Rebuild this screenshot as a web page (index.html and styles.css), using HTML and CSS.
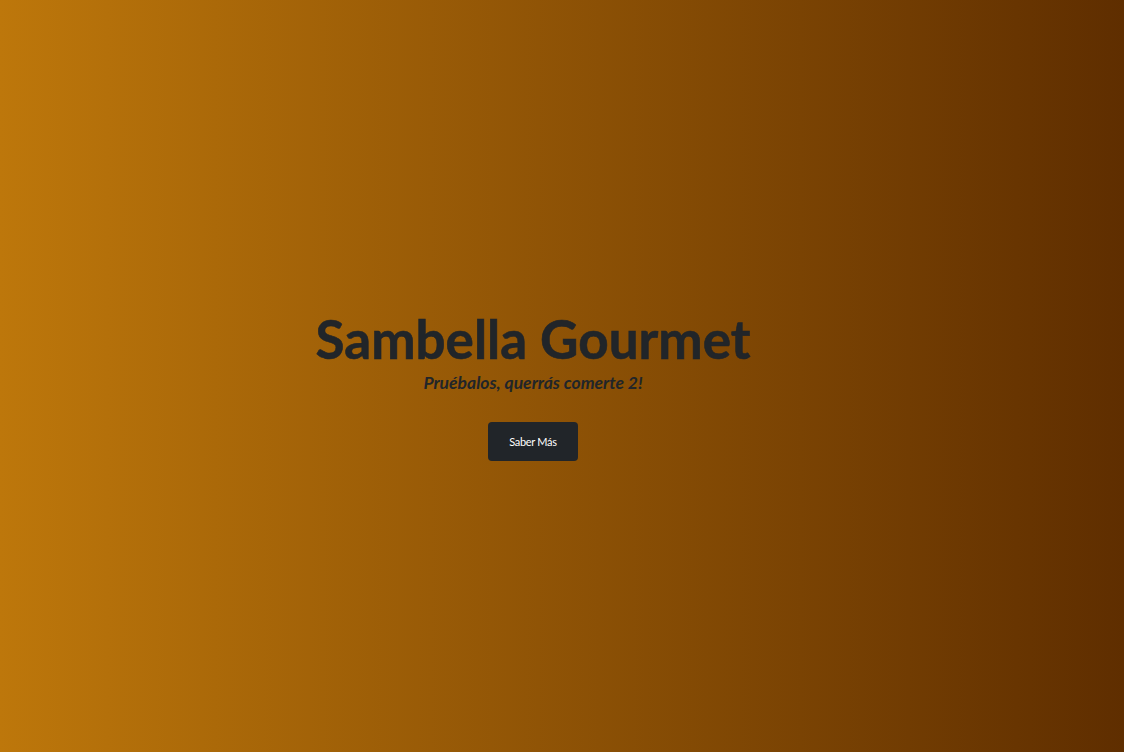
FILE: index.html
```html
<!DOCTYPE html>
<html lang="es">
<head>
<meta charset="utf-8">
<title>Sambella Gourmet</title>
<link rel="stylesheet" href="styles.css">
</head>
<body>
<header class="hero">
  <div class="hero-content">
    <h1 class="hero-title">Sambella Gourmet</h1>
    <p class="hero-subtitle">Pruébalos, querrás comerte 2!</p>
    <a class="hero-button" href="#">Saber Más</a>
  </div>
</header>
</body>
</html>
```
FILE: styles.css
```css
html, body {
  margin: 0;
  padding: 0;
  height: 100%;
}
body {
  font-family: Lato, "Open Sans", sans-serif;
  color: #212529;
}
.hero {
  height: 752px;
  box-sizing: border-box;
  padding-right: 58px;
  background: linear-gradient(to right, #bd770b, #5f2e00);
  display: flex;
  align-items: center;
  justify-content: center;
}
.hero-content {
  display: flex;
  flex-direction: column;
  align-items: center;
  padding-top: 16px;
}
.hero-title {
  margin: 0;
  font-size: 53px;
  font-weight: 700;
  line-height: 1.2;
  color: #212529;
  -webkit-text-stroke: 0.6px #212529;
}
.hero-subtitle {
  margin: 1px 0 0;
  font-size: 17.5px;
  font-weight: 700;
  font-style: italic;
  color: #212529;
}
.hero-button {
  margin-top: 29px;
  width: 90px;
  height: 39px;
  display: flex;
  align-items: center;
  justify-content: center;
  background: #212529;
  color: #fff;
  font-size: 11px;
  letter-spacing: -0.3px;
  text-decoration: none;
  border-radius: 4px;
}
```
